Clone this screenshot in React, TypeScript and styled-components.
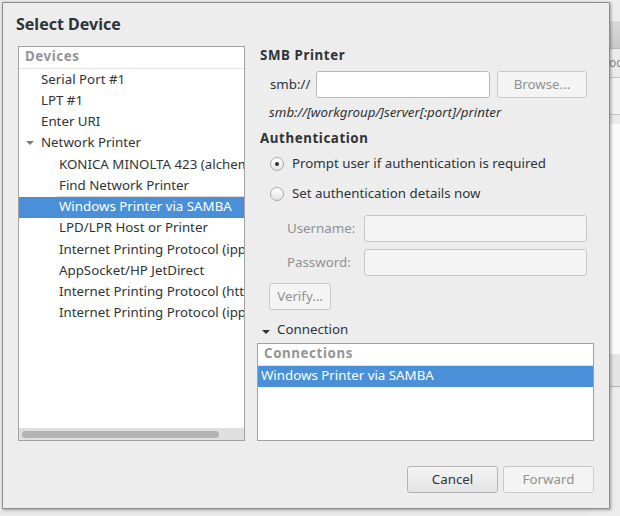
import React, { useState } from "react";
import styled, { createGlobalStyle } from "styled-components";

const GlobalStyle = createGlobalStyle`
  html, body {
    margin: 0;
    padding: 0;
  }
  body {
    background: #e6e6e6;
    font-family: "Noto Sans", "Open Sans", sans-serif;
    font-size: 13.3px;
    color: #2e3436;
    overflow: hidden;
  }
`;

type Device = { label: string; level: number; expander?: boolean };

const devices: Device[] = [
  { label: "Serial Port #1", level: 1 },
  { label: "LPT #1", level: 1 },
  { label: "Enter URI", level: 1 },
  { label: "Network Printer", level: 1, expander: true },
  { label: "KONICA MINOLTA 423 (alchemy)", level: 2 },
  { label: "Find Network Printer", level: 2 },
  { label: "Windows Printer via SAMBA", level: 2 },
  { label: "LPD/LPR Host or Printer", level: 2 },
  { label: "Internet Printing Protocol (ipps)", level: 2 },
  { label: "AppSocket/HP JetDirect", level: 2 },
  { label: "Internet Printing Protocol (https)", level: 2 },
  { label: "Internet Printing Protocol (ipp)", level: 2 },
];

const App: React.FC<{}> = () => {
  const [selected, setSelected] = useState(6);
  const [promptUser, setPromptUser] = useState(true);

  return (
    <Desktop>
      <GlobalStyle />
      <BackWindow>
        <BackTop />
        <BackToolbar />
        <BackLabel>oc</BackLabel>
        <BackRow />
        <BackSheet />
        <BackStatus />
      </BackWindow>

      <Dialog>
        <Title>Select Device</Title>
        <Body>
          <TreeBox>
            <ColumnHeader>Devices</ColumnHeader>
            <TreeRows>
              {devices.map((d, i) => (
                <TreeRow
                  key={i}
                  $level={d.level}
                  $selected={i === selected}
                  $focusAbove={i === selected - 1}
                  onClick={() => setSelected(i)}
                >
                  {d.expander && <Expander $color="#7a7a7a" />}
                  {d.label}
                </TreeRow>
              ))}
            </TreeRows>
            <ScrollTrough>
              <ScrollThumb />
            </ScrollTrough>
          </TreeBox>

          <Panel>
            <SectionTitle>SMB Printer</SectionTitle>
            <SmbRow>
              <SmbLabel>smb://</SmbLabel>
              <TextInput $width={174} />
              <Button $width={90} disabled>
                Browse...
              </Button>
            </SmbRow>
            <Hint>smb://[workgroup/]server[:port]/printer</Hint>

            <SectionTitle $gap={6}>Authentication</SectionTitle>
            <RadioRow $gap={4} onClick={() => setPromptUser(true)}>
              <Radio $checked={promptUser} />
              <RadioText>Prompt user if authentication is required</RadioText>
            </RadioRow>
            <RadioRow $gap={8} onClick={() => setPromptUser(false)}>
              <Radio $checked={!promptUser} />
              <RadioText>Set authentication details now</RadioText>
            </RadioRow>

            <FieldRow $gap={10}>
              <FieldLabel>Username:</FieldLabel>
              <TextInput $width={223} disabled={promptUser} />
            </FieldRow>
            <FieldRow $gap={7}>
              <FieldLabel>Password:</FieldLabel>
              <TextInput $width={223} type="password" disabled={promptUser} />
            </FieldRow>
            <VerifyRow>
              <Button $width={62} disabled>
                Verify...
              </Button>
            </VerifyRow>

            <ExpanderRow>
              <Expander $color="#2e3436" />
              Connection
            </ExpanderRow>
            <ListBox>
              <ColumnHeader $indent={6}>Connections</ColumnHeader>
              <ListRow>Windows Printer via SAMBA</ListRow>
            </ListBox>
          </Panel>
        </Body>

        <Footer>
          <Button $width={91}>Cancel</Button>
          <Button $width={91} disabled>
            Forward
          </Button>
        </Footer>
      </Dialog>
    </Desktop>
  );
};

const Desktop = styled.div`
  position: relative;
  width: 620px;
  height: 516px;
  overflow: hidden;
  background: #e9e9e9;
`;

/* window peeking out behind the dialog */
const BackWindow = styled.div`
  position: absolute;
  left: 590px;
  top: 0;
  width: 40px;
  height: 516px;
  display: flex;
  flex-direction: column;
  background: #ececec;
`;

const BackTop = styled.div`
  height: 21px;
  background: #ededed;
`;

const BackToolbar = styled.div`
  height: 27px;
  background: linear-gradient(#dadada, #c9c9c9);
  border-bottom: 1px solid #b8b8b8;
`;

const BackLabel = styled.div`
  height: 28px;
  padding-left: 19px;
  line-height: 28px;
  font-size: 12px;
  color: #8a8a8a;
  border-bottom: 1px solid #c8c8c8;
`;

const BackRow = styled.div`
  height: 36px;
  border-bottom: 1px solid #c8c8c8;
  background: #f2f2f2;
`;

const BackSheet = styled.div`
  margin-top: 9px;
  height: 230px;
  background: #fbfbfb;
`;

const BackStatus = styled.div`
  height: 32px;
  background: #e4e4e4;
  border-bottom: 1px solid #b5b5b5;
`;

const Dialog = styled.div`
  position: absolute;
  left: 2px;
  top: 2px;
  width: 608px;
  height: 507px;
  box-sizing: border-box;
  display: flex;
  flex-direction: column;
  padding: 0 15px;
  background: #ededed;
  border: 1px solid #8c8c8c;
  box-shadow: 1px 1px 3px rgba(0, 0, 0, 0.35);
`;

const Title = styled.div`
  margin: 10px 0 0 -2px;
  height: 22px;
  line-height: 22px;
  font-size: 16px;
  font-weight: bold;
  color: #2e3436;
`;

const Body = styled.div`
  margin-top: 11px;
  height: 395px;
  display: flex;
  gap: 12px;
`;

const TreeBox = styled.div`
  width: 227px;
  box-sizing: border-box;
  display: flex;
  flex-direction: column;
  background: #fff;
  border: 1px solid #a3a3a3;
`;

const ColumnHeader = styled.div<{ $indent?: number }>`
  height: 22px;
  box-sizing: border-box;
  flex-shrink: 0;
  padding-left: ${(p) => p.$indent ?? 6}px;
  line-height: 19px;
  font-weight: bold;
  letter-spacing: 0.6px;
  color: #929595;
  border-bottom: 1px solid #e2e2e2;
`;

const TreeRows = styled.div`
  flex: 1;
  overflow: hidden;
`;

const TreeRow = styled.div<{
  $level: number;
  $selected: boolean;
  $focusAbove: boolean;
}>`
  position: relative;
  display: flex;
  align-items: center;
  height: 21.25px;
  box-sizing: border-box;
  padding: 0 0 2px ${(p) => (p.$level === 1 ? 22 : 40)}px;
  white-space: nowrap;
  overflow: hidden;
  color: ${(p) => (p.$selected ? "#fff" : "#2e3436")};
  background: ${(p) => (p.$selected ? "#4a90d9" : "transparent")};
  cursor: default;

  &::after {
    content: "";
    display: ${(p) => (p.$focusAbove ? "block" : "none")};
    position: absolute;
    left: 38px;
    right: 0;
    bottom: 0;
    height: 1px;
    background: #d8d8d8;
  }
`;

const Expander = styled.span<{ $color: string }>`
  position: absolute;
  left: 7px;
  width: 0;
  height: 0;
  border-left: 4px solid transparent;
  border-right: 4px solid transparent;
  border-top: 4px solid ${(p) => p.$color};
  margin-top: 2px;
`;

const ScrollTrough = styled.div`
  height: 12px;
  flex-shrink: 0;
  display: flex;
  align-items: center;
  padding: 0 3px;
  background: #dfdfdf;
`;

const ScrollThumb = styled.div`
  width: 197px;
  height: 7px;
  border-radius: 4px;
  background: #b3b3b3;
`;

const Panel = styled.div`
  flex: 1;
  display: flex;
  flex-direction: column;
`;

const SectionTitle = styled.div<{ $gap?: number }>`
  margin-top: ${(p) => p.$gap ?? 0}px;
  padding-left: 3px;
  height: 20px;
  line-height: 18px;
  font-weight: bold;
  letter-spacing: 0.6px;
`;

const SmbRow = styled.div`
  display: flex;
  align-items: center;
  margin-top: 5px;
  padding-left: 13px;
`;

const SmbLabel = styled.span`
  width: 46px;
  padding-bottom: 2px;
`;

const TextInput = styled.input<{ $width: number }>`
  width: ${(p) => p.$width}px;
  height: 27px;
  box-sizing: border-box;
  margin: 0 7px 0 0;
  padding: 0 6px;
  font: inherit;
  background: #fff;
  border: 1px solid #b8b8b8;
  border-radius: 3px;
  outline: none;

  &:disabled {
    background: #f4f4f4;
    border-color: #c6c6c6;
  }
`;

const Button = styled.button<{ $width: number }>`
  width: ${(p) => p.$width}px;
  height: 27px;
  box-sizing: border-box;
  padding: 0 0 2px;
  font: inherit;
  color: #2e3436;
  background: linear-gradient(#f4f4f4, #e3e3e3);
  border: 1px solid #b4b4b4;
  border-radius: 3px;

  &:disabled {
    color: #8f9292;
    background: #f4f4f4;
    border-color: #c9c9c9;
  }
`;

const Hint = styled.div`
  margin-top: 5px;
  padding-left: 12px;
  height: 20px;
  line-height: 18px;
  font-style: italic;
`;

const RadioRow = styled.div<{ $gap: number }>`
  display: flex;
  align-items: center;
  gap: 8px;
  height: 22px;
  margin-top: ${(p) => p.$gap}px;
  padding-left: 13px;
  cursor: default;
`;

const RadioText = styled.span`
  padding-bottom: 2px;
`;

const Radio = styled.span<{ $checked: boolean }>`
  width: 14px;
  height: 14px;
  box-sizing: border-box;
  display: flex;
  align-items: center;
  justify-content: center;
  border: 1px solid #a9a9a9;
  border-radius: 50%;
  background: linear-gradient(#ffffff, #e4e4e4);

  &::after {
    content: "";
    display: ${(p) => (p.$checked ? "block" : "none")};
    width: 4px;
    height: 4px;
    border-radius: 50%;
    background: #2e3436;
  }
`;

const FieldRow = styled.div<{ $gap: number }>`
  display: flex;
  align-items: center;
  margin-top: ${(p) => p.$gap}px;
  padding-left: 30px;
`;

const FieldLabel = styled.span`
  width: 77px;
  padding-bottom: 2px;
  color: #8f9292;
`;

const VerifyRow = styled.div`
  margin-top: 7px;
  padding-left: 12px;
`;

const ExpanderRow = styled.div`
  position: relative;
  display: flex;
  align-items: center;
  height: 20px;
  box-sizing: border-box;
  margin-top: 10px;
  padding: 0 0 2px 20px;

  ${Expander} {
    left: 5px;
    margin-top: 5px;
  }
`;

const ListBox = styled.div`
  flex: 1;
  margin-top: 3px;
  box-sizing: border-box;
  background: #fff;
  border: 1px solid #a3a3a3;
`;

const ListRow = styled.div`
  height: 21px;
  line-height: 19px;
  padding-left: 3px;
  color: #fff;
  background: #4a90d9;
`;

const Footer = styled.div`
  display: flex;
  justify-content: flex-end;
  gap: 5px;
  margin-top: 25px;
`;

export default App;
